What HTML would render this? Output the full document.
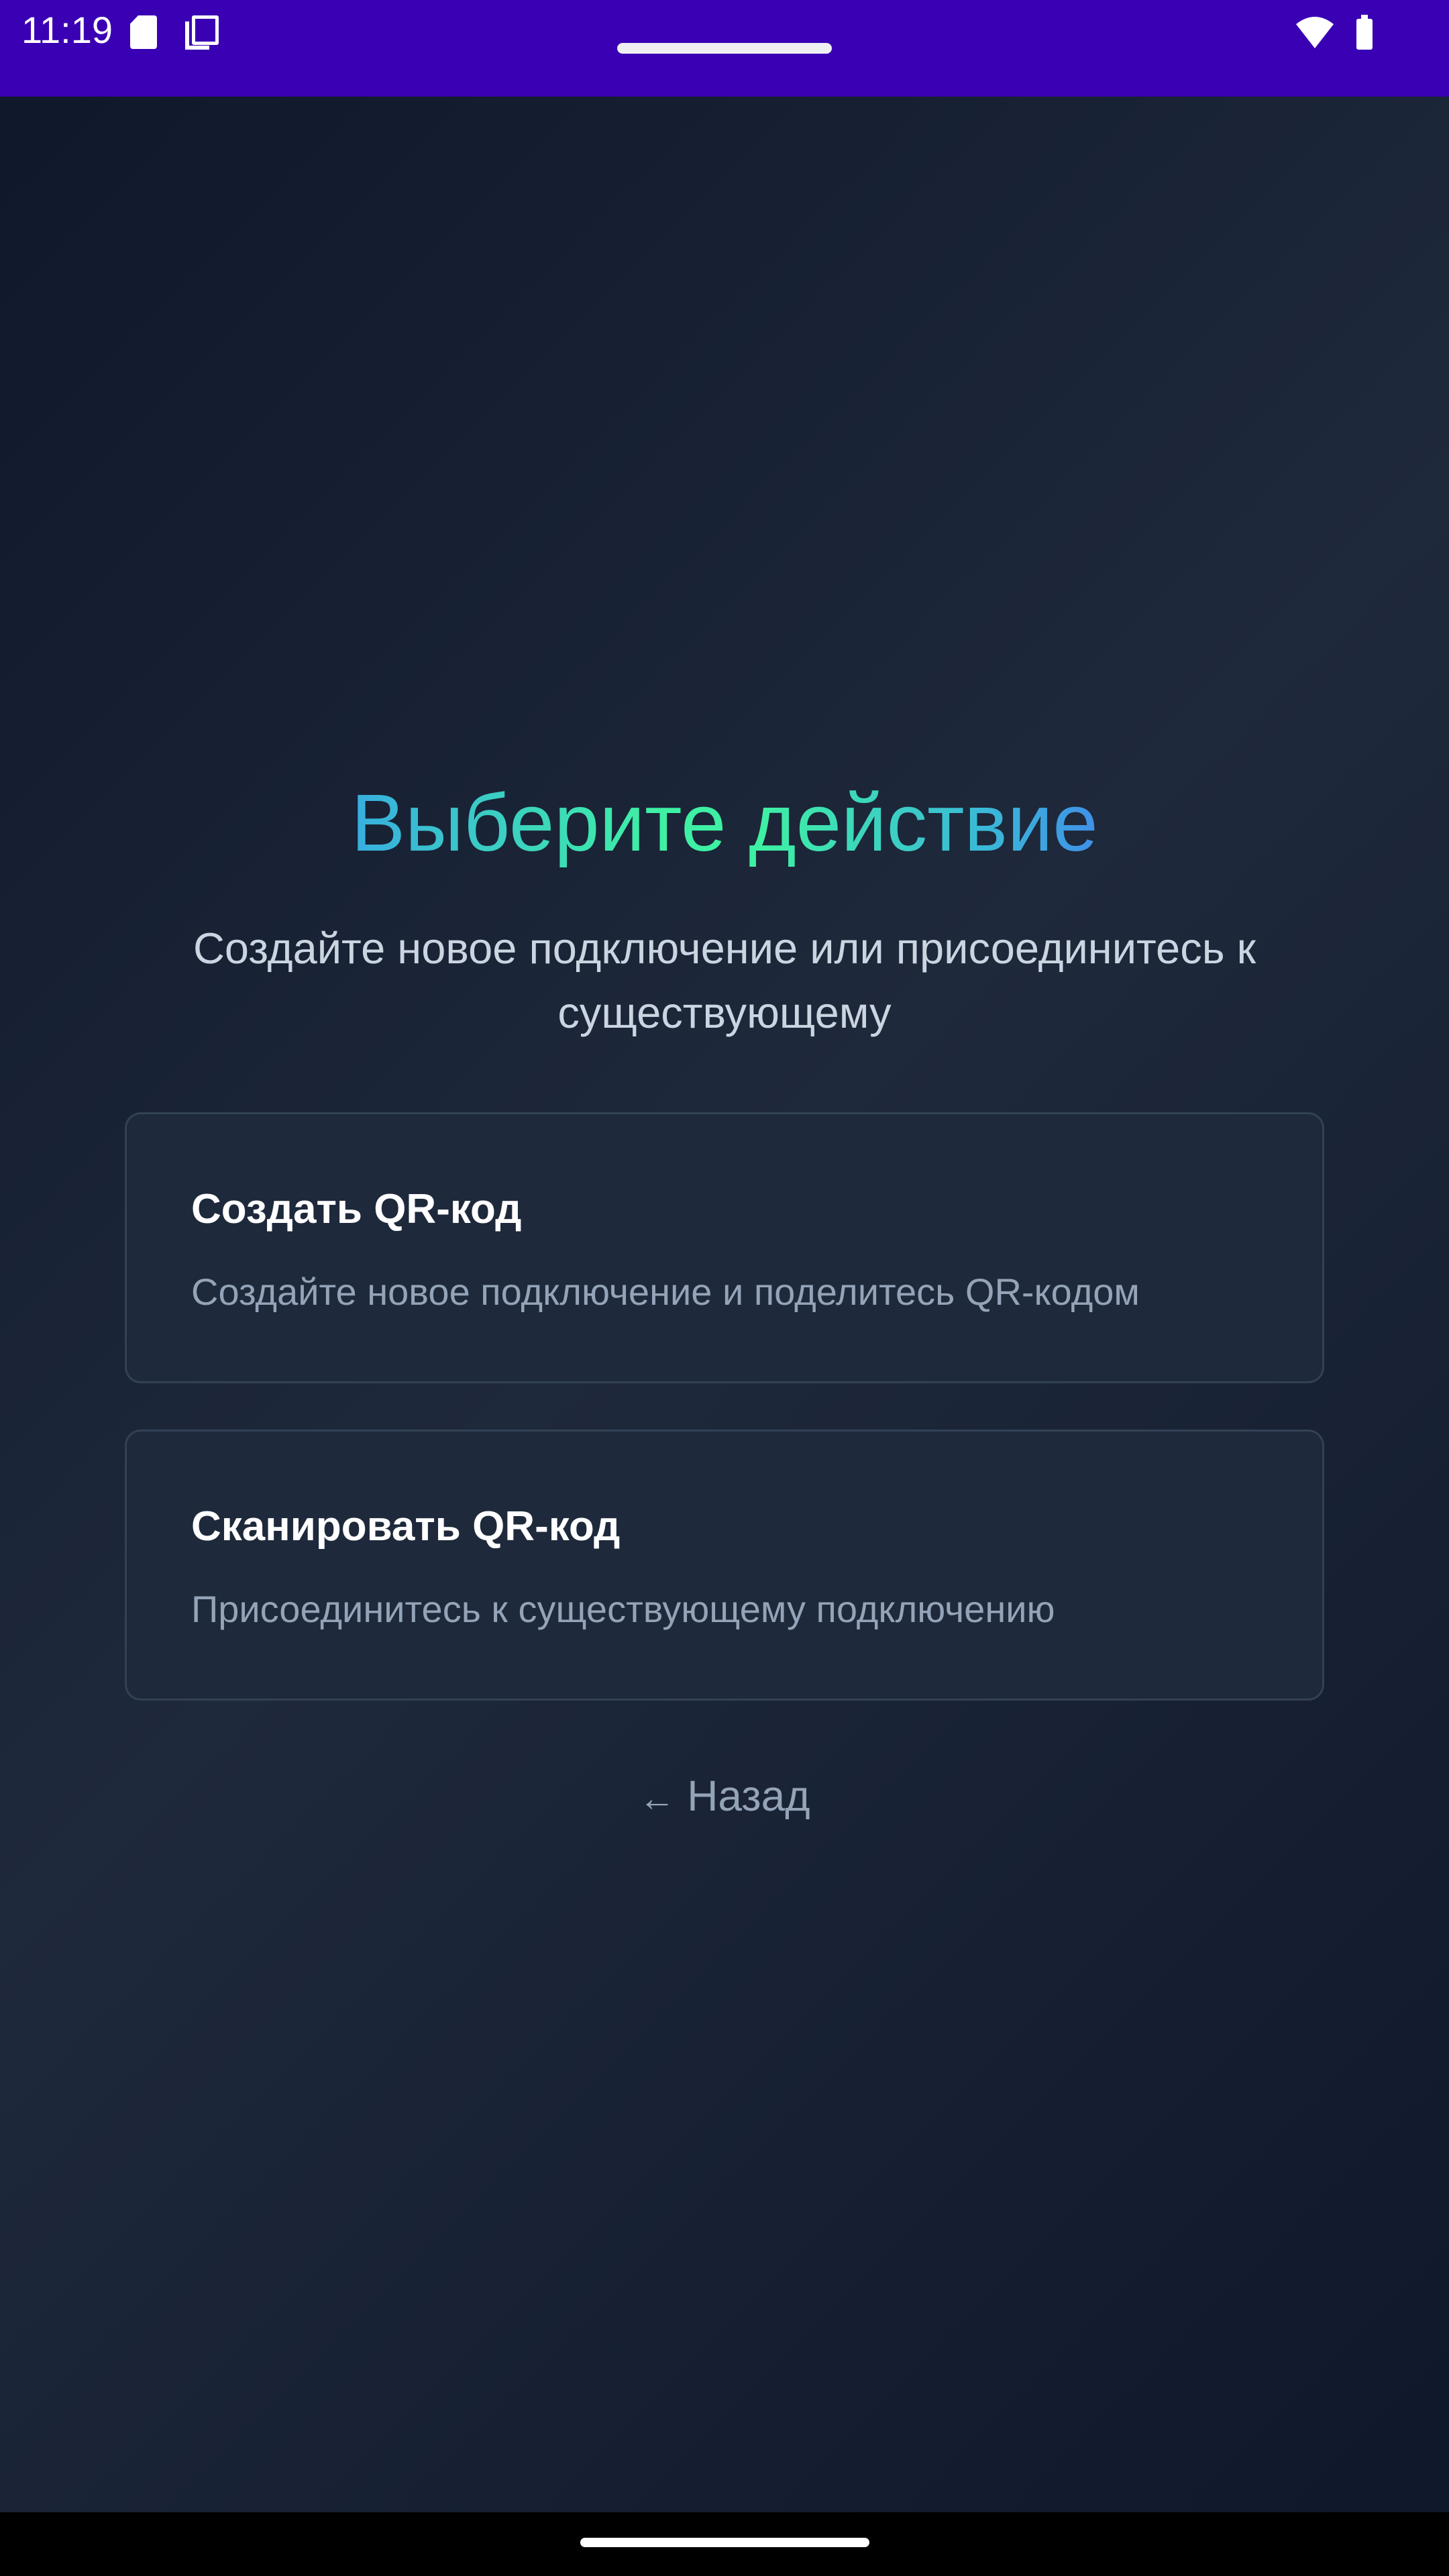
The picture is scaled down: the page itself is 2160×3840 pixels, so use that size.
<!DOCTYPE html>
<html><head><meta charset="utf-8"><style>
*{margin:0;padding:0;box-sizing:border-box}
html,body{width:2160px;height:3840px;overflow:hidden}
body{position:relative;font-family:"Liberation Sans",sans-serif;background:linear-gradient(135deg,#0f172a 0%,#1e293b 48%,#0f172a 100%)}
.sb{position:absolute;left:0;top:0;width:2160px;height:144px;background:#3a00b3}
.abs{position:absolute}
.c{position:absolute;left:0;width:2160px;text-align:center;white-space:nowrap}
.card{position:absolute;left:186px;width:1788px;height:404px;border:3px solid #334155;border-radius:24px;background:#1e293b}
.ct{position:absolute;left:96px;font-weight:bold;font-size:62px;color:#fff;white-space:nowrap}
.cd{position:absolute;left:96px;font-size:56px;color:#94a3b8;white-space:nowrap}
</style></head><body>
<div class="sb">
<div class="abs" style="left:32px;top:12px;font-size:56px;color:#fff">11:19</div>
<div class="abs" style="left:194px;top:23px;width:40px;height:50px;background:#fff;border-radius:4px;clip-path:polygon(30% 0,100% 0,100% 100%,0 100%,0 25%)"></div>
<div class="abs" style="left:286px;top:23px;width:40px;height:44px;border:5px solid #fff;border-radius:3px"></div>
<div class="abs" style="left:276px;top:32px;width:6px;height:42px;background:#fff"></div>
<div class="abs" style="left:276px;top:68px;width:36px;height:6px;background:#fff"></div>
<div class="abs" style="left:920px;top:64px;width:320px;height:16px;background:#eff0f2;border-radius:8px"></div>
<svg class="abs" style="left:1930px;top:22px" width="60" height="52" viewBox="0 0 60 52"><path d="M2 14 Q30 -8 58 14 L30 50 Z" fill="#fff"/></svg>
<div class="abs" style="left:2022px;top:28px;width:24px;height:46px;background:#fff;border-radius:3px"></div>
<div class="abs" style="left:2029px;top:22px;width:10px;height:8px;background:#fff"></div>
</div>
<div class="c" style="top:1156px;font-size:121px;line-height:140px"><span style="background:linear-gradient(90deg,#38aee0 0%,#3ef0a4 40%,#3ef0a4 55%,#3ab8d8 85%,#4090e8 100%);-webkit-background-clip:text;background-clip:text;color:transparent">Выберите действие</span></div>
<div class="c" style="top:1366px;font-size:65px;line-height:96px;color:#cbd5e1">Создайте новое подключение или присоединитесь к<br>существующему</div>
<div class="card" style="top:1658px"><div class="ct" style="top:106px">Создать QR-код</div><div class="cd" style="top:232px">Создайте новое подключение и поделитесь QR-кодом</div></div>
<div class="card" style="top:2131px"><div class="ct" style="top:106px">Сканировать QR-код</div><div class="cd" style="top:232px">Присоединитесь к существующему подключению</div></div>
<div class="c" style="top:2640px;font-size:64px;color:#94a3b8"><span style="font-size:54px">←</span> Назад</div>
<div class="abs" style="left:0;top:3745px;width:2160px;height:95px;background:#000"></div>
<div class="abs" style="left:865px;top:3783px;width:431px;height:14px;background:#fff;border-radius:7px"></div>
</body></html>
